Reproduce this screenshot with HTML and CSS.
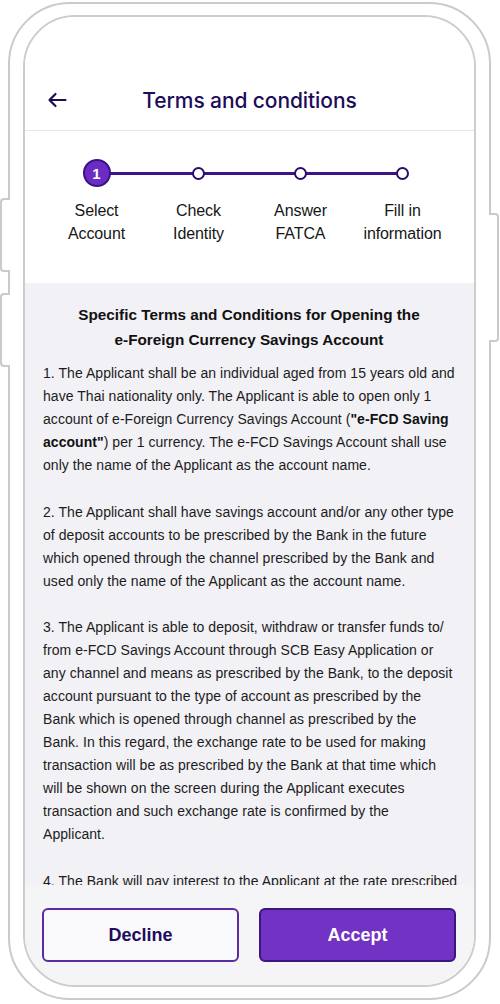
FILE: index.html
```html
<!DOCTYPE html>
<html lang="en">
<head>
<meta charset="utf-8">
<title>Terms and conditions</title>
<link rel="stylesheet" href="styles.css">
</head>
<body>
<div class="device">
  <span class="side-btn side-left btn-a"></span>
  <span class="side-btn side-left btn-b"></span>
  <span class="side-btn side-right btn-c"></span>
  <div class="screen">
    <header class="appbar">
      <div class="appbar-row">
        <button class="back" aria-label="Back">
          <svg width="20" height="16" viewBox="0 0 20 16"><path d="M18.5 8H2.5M8.5 2L2.5 8l6 6" fill="none" stroke="#1c0c5a" stroke-width="2.2" stroke-linecap="round" stroke-linejoin="round"/></svg>
        </button>
        <h1 class="title">Terms and conditions</h1>
        <span></span>
      </div>
    </header>

    <section class="stepper">
      <ol class="steps">
        <li class="step active"><span class="marker"><span class="dot">1</span></span><span class="label">Select<br>Account</span></li>
        <li class="step"><span class="marker"><span class="dot"></span></span><span class="label">Check<br>Identity</span></li>
        <li class="step"><span class="marker"><span class="dot"></span></span><span class="label">Answer<br>FATCA</span></li>
        <li class="step"><span class="marker"><span class="dot"></span></span><span class="label">Fill in<br>information</span></li>
      </ol>
    </section>

    <main class="terms">
      <h2 class="terms-title">Specific Terms and Conditions for Opening the<br>e-Foreign Currency Savings Account</h2>
      <p>1. The Applicant shall be an individual aged from 15 years old and<br>have Thai nationality only. The Applicant is able to open only 1<br>account of e-Foreign Currency Savings Account (<b>"e-FCD Saving</b><br><b>account"</b>) per 1 currency. The e-FCD Savings Account shall use<br>only the name of the Applicant as the account name.</p>
      <p>2. The Applicant shall have savings account and/or any other type<br>of deposit accounts to be prescribed by the Bank in the future<br>which opened through the channel prescribed by the Bank and<br>used only the name of the Applicant as the account name.</p>
      <p>3. The Applicant is able to deposit, withdraw or transfer funds to/<br>from e-FCD Savings Account through SCB Easy Application or<br>any channel and means as prescribed by the Bank, to the deposit<br>account pursuant to the type of account as prescribed by the<br>Bank which is opened through channel as prescribed by the<br>Bank. In this regard, the exchange rate to be used for making<br>transaction will be as prescribed by the Bank at that time which<br>will be shown on the screen during the Applicant executes<br>transaction and such exchange rate is confirmed by the<br>Applicant.</p>
      <p>4. The Bank will pay interest to the Applicant at the rate prescribed<br>by the Bank which will be announced from time to time.</p>
    </main>

    <footer class="actions">
      <button class="btn btn-outline">Decline</button>
      <button class="btn btn-primary">Accept</button>
    </footer>
  </div>
</div>
</body>
</html>
```

FILE: styles.css
```css
* { box-sizing: border-box; }

html, body {
  margin: 0;
  padding: 0;
  background: #ffffff;
}

body {
  font-family: "Liberation Sans", Arial, sans-serif;
  color: #1a1a1a;
}

.device {
  position: relative;
  margin: 2px 0 0 8px;
  width: 483px;
  height: 998px;
  border: 2px solid #cacaca;
  border-radius: 62px;
  padding: 11px 13px;
  background: #ffffff;
}

.side-btn {
  position: absolute;
  width: 10px;
  background: #ffffff;
  border: 2px solid #cacaca;
}
.side-left {
  left: -10px;
  border-right: none;
  border-radius: 4px 0 0 4px;
}
.side-right {
  right: -10px;
  border-left: none;
  border-radius: 0 4px 4px 0;
}
.btn-a { top: 194px; height: 74px; }
.btn-b { top: 289px; height: 74px; }
.btn-c { top: 209px; height: 129px; }

.screen {
  width: 100%;
  height: 100%;
  border: 2px solid #cdcdcd;
  border-radius: 52px;
  overflow: hidden;
  display: flex;
  flex-direction: column;
  background: #ffffff;
}

/* App bar */
.appbar {
  flex: 0 0 114px;
  display: flex;
  align-items: flex-end;
  padding-bottom: 8px;
  border-bottom: 1px solid #e6e5ea;
  background: #ffffff;
}
.appbar-row {
  width: 100%;
  height: 44px;
  display: grid;
  grid-template-columns: 1fr auto 1fr;
  align-items: center;
  padding: 0 21px;
}
.back {
  justify-self: start;
  width: 22px;
  height: 22px;
  padding: 0;
  border: none;
  background: none;
  display: flex;
  align-items: center;
  justify-content: center;
}
.title {
  margin: 0;
  font-family: Inter, "Liberation Sans", sans-serif;
  font-size: 21px;
  font-weight: 500;
  color: #1c0c5a;
  letter-spacing: -0.1px;
}

/* Stepper */
.stepper {
  flex: 0 0 152px;
  padding-top: 28px;
  background: #ffffff;
}
.steps {
  position: relative;
  list-style: none;
  margin: 0 auto;
  padding: 0;
  width: 408px;
  display: grid;
  grid-template-columns: repeat(4, 102px);
}
.steps::before {
  content: "";
  position: absolute;
  left: 51px;
  right: 51px;
  top: 13px;
  height: 3px;
  background: #3d1488;
}
.step {
  position: relative;
  display: flex;
  flex-direction: column;
  align-items: center;
}
.marker {
  height: 28px;
  display: flex;
  align-items: center;
  justify-content: center;
}
.dot {
  width: 13px;
  height: 13px;
  border-radius: 50%;
  background: #ffffff;
  border: 2px solid #2a0c6e;
}
.step.active .dot {
  width: 28px;
  height: 28px;
  background: #6c2cc2;
  border: 2px solid #3a1388;
  color: #ffffff;
  font-size: 15px;
  font-weight: 700;
  display: flex;
  align-items: center;
  justify-content: center;
}
.label {
  margin-top: 12px;
  font-size: 16px;
  line-height: 23px;
  text-align: center;
  color: #161616;
  letter-spacing: -0.1px;
}

/* Terms */
.terms {
  flex: 1 1 auto;
  overflow: hidden;
  background: #f2f1f5;
  padding: 19px 8px 0 18px;
}
.terms-title {
  margin: 0 11px 10px 0;
  font-size: 15.3px;
  line-height: 25px;
  font-weight: 700;
  text-align: center;
  color: #111111;
}
.terms p {
  margin: 0 0 23.5px;
  font-size: 14px;
  line-height: 23px;
  letter-spacing: 0.05px;
  white-space: nowrap;
  color: #1c1c1c;
}
.terms b { font-weight: 700; color: #111; }

/* Actions */
.actions {
  flex: 0 0 100px;
  display: flex;
  gap: 20px;
  padding: 23px 18px 0 17px;
  background: #f5f4f7;
}
.btn {
  flex: 1 1 0;
  height: 54px;
  border-radius: 6px;
  font-family: "Liberation Sans", Arial, sans-serif;
  font-size: 18px;
  font-weight: 700;
}
.btn-outline {
  background: #f9f8fb;
  border: 2px solid #5b2ba2;
  color: #1d0d5c;
}
.btn-primary {
  background: #7232c4;
  border: 2px solid #3b167f;
  color: #ffffff;
}
```
